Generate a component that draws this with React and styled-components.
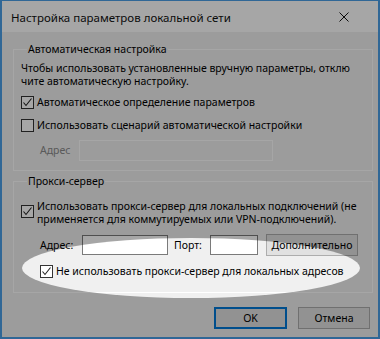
import React from 'react'
import styled, { createGlobalStyle } from 'styled-components'

const GlobalStyle = createGlobalStyle`
  html, body { margin: 0; padding: 0; background: #9c9c9c; }
  body { font-family: "Noto Sans", "Open Sans", sans-serif; }
`

const Frame = styled.div`
  position: relative;
  width: 380px;
  height: 339px;
  overflow: hidden;
`

const Window = styled.div`
  box-sizing: border-box;
  width: 380px;
  height: 339px;
  background: #f0f0f0;
  border: 2px solid #4a9ee6;
  border-top-width: 1px;
  display: flex;
  flex-direction: column;
  color: #000;
  font-size: 10.5px;
  white-space: nowrap;
`

const TitleBar = styled.div`
  height: 31px;
  flex: none;
  background: #fff;
  display: flex;
  align-items: center;
  justify-content: space-between;
  padding-left: 9px;
`

const Title = styled.span`
  font-size: 11.5px;
  color: #111;
  margin-top: 1px;
`

const Close = styled.div`
  width: 22px;
  height: 22px;
  margin-right: 23px;
  display: flex;
  align-items: center;
  justify-content: center;
`

const Body = styled.div`
  padding: 9px 5px 0 11px;
  display: flex;
  flex-direction: column;
`

const Group = styled.fieldset`
  margin: ${p => p.$top || 0}px 0 0 0;
  padding: 0 7px ${p => p.$bottom}px 7px;
  border: 1px solid #ffffff;
  min-width: 0;
`

const Legend = styled.legend`
  padding: 0 1px;
  margin-left: 6px;
  line-height: 16px;
`

const Text = styled.p`
  margin: 5px 0 0;
  line-height: 13px;
`

const Row = styled.div`
  display: flex;
  align-items: ${p => p.$start ? 'flex-start' : 'center'};
  margin-top: ${p => p.$mt}px;
  margin-left: ${p => p.$ml || 0}px;
  line-height: 13px;
`

const Box = styled.span`
  box-sizing: border-box;
  flex: none;
  width: 13px;
  height: 13px;
  border: 1px solid #333;
  background: #fff;
  margin-top: ${p => p.$mt || 0}px;
  margin-right: 3px;
  display: flex;
  align-items: center;
  justify-content: center;
`

const Label = styled.span`
  color: ${p => p.$disabled ? '#8a8a8a' : '#000'};
  width: ${p => p.$w ? p.$w + 'px' : 'auto'};
  flex: none;
`

const Field = styled.div`
  box-sizing: border-box;
  width: ${p => p.$w}px;
  height: ${p => p.$h || 20}px;
  background: ${p => p.$disabled ? '#f0f0f0' : '#fff'};
  border: 1px solid ${p => p.$disabled ? '#ffffff' : '#7a7a7a'};
  margin-right: ${p => p.$mr || 0}px;
  flex: none;
`

const Button = styled.button`
  box-sizing: border-box;
  width: ${p => p.$w}px;
  height: 22px;
  padding: 0;
  font-family: inherit;
  font-size: 10.5px;
  color: #000;
  background: #e1e1e1;
  border: ${p => p.$primary ? '2px solid #0078d7' : '1px solid #adadad'};
`

const Footer = styled.div`
  display: flex;
  justify-content: flex-end;
  gap: 11px;
  margin-top: 14px;
  padding-right: 3px;
`

const Spotlight = styled.div`
  position: absolute;
  left: 22px;
  top: 238px;
  width: 338px;
  height: 60px;
  border-radius: 50%;
  box-shadow: 0 0 0 600px rgba(0, 0, 0, 0.35);
  pointer-events: none;
`

const Check = () => (
  <svg width="11" height="11" viewBox="0 0 11 11">
    <path d="M1.5 5.5 L4 8.5 L9.5 1.5" fill="none" stroke="#222" strokeWidth="1.1" />
  </svg>
)

const CloseIcon = () => (
  <svg width="10" height="10" viewBox="0 0 10 10">
    <path d="M0.5 0.5 L9.5 9.5 M9.5 0.5 L0.5 9.5" stroke="#111" strokeWidth="1" />
  </svg>
)

const App = () => {
  return (
    <Frame>
      <GlobalStyle />
      <Window>
        <TitleBar>
          <Title>Настройка параметров локальной сети</Title>
          <Close><CloseIcon /></Close>
        </TitleBar>
        <Body>
          <Group $bottom={9}>
            <Legend>Автоматическая настройка</Legend>
            <Text>
              Чтобы использовать установленные вручную параметры, отклю<br />
              чите автоматическую настройку.
            </Text>
            <Row $mt={8}>
              <Box><Check /></Box>
              <Label>Автоматическое определение параметров</Label>
            </Row>
            <Row $mt={10}>
              <Box />
              <Label>Использовать сценарий автоматической настройки</Label>
            </Row>
            <Row $mt={8} $ml={19}>
              <Label $disabled $w={39}>Адрес</Label>
              <Field $disabled $w={194} $h={21} />
            </Row>
          </Group>
          <Group $top={2} $bottom={14}>
            <Legend>Прокси-сервер</Legend>
            <Row $mt={11} $start>
              <Box $mt={5}><Check /></Box>
              <Label>
                Использовать прокси-сервер для локальных подключений (не<br />
                применяется для коммутируемых или VPN-подключений).
              </Label>
            </Row>
            <Row $mt={8} $ml={19}>
              <Label $w={42}>Адрес:</Label>
              <Field $w={86} $mr={6} />
              <Label $w={36}>Порт:</Label>
              <Field $w={48} $mr={8} />
              <Button $w={92}>Дополнительно</Button>
            </Row>
            <Row $mt={9} $ml={19}>
              <Box><Check /></Box>
              <Label>Не использовать прокси-сервер для локальных адресов</Label>
            </Row>
          </Group>
          <Footer>
            <Button $w={73} $primary>OK</Button>
            <Button $w={72}>Отмена</Button>
          </Footer>
        </Body>
      </Window>
      <Spotlight />
    </Frame>
  )
}

export default App
